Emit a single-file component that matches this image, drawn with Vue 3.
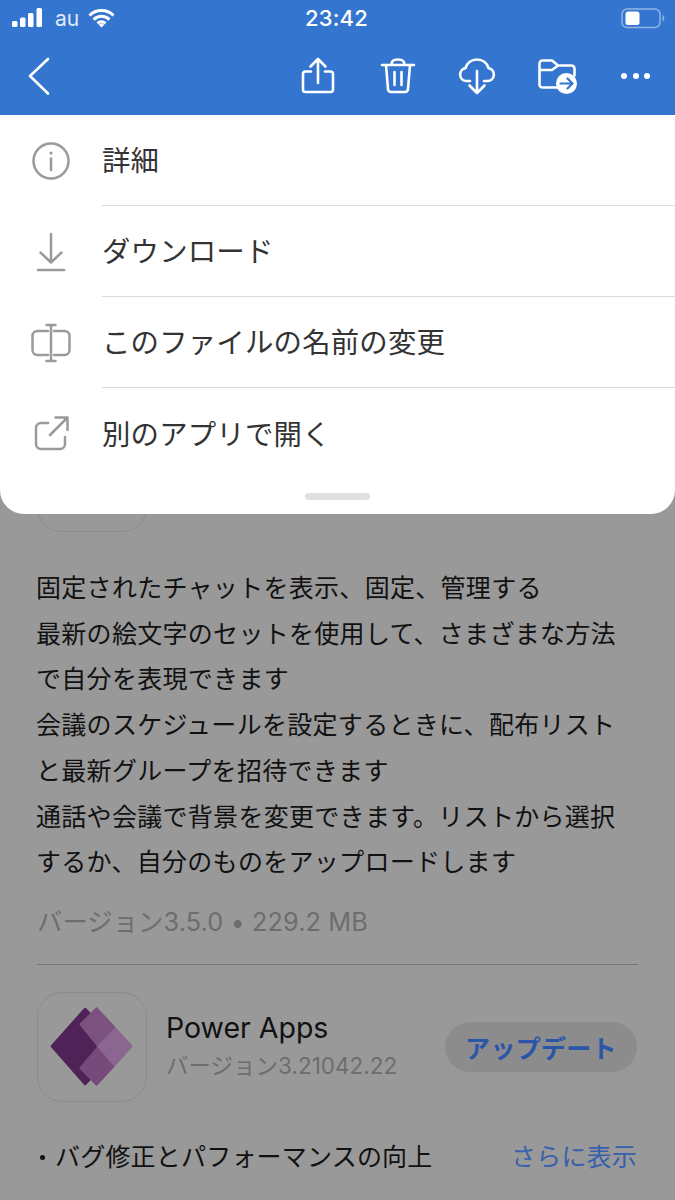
<template>
  <div class="screen">
    <header class="top">
      <div class="status">
        <div class="status-left">
          <svg class="signal" width="31" height="20" viewBox="0 0 31 20">
            <rect x="0" y="13" width="5.5" height="6" rx="1.5" />
            <rect x="8" y="9.5" width="5.5" height="9.5" rx="1.5" />
            <rect x="16" y="5" width="5.5" height="14" rx="1.5" />
            <rect x="24.5" y="0" width="5.5" height="19" rx="1.5" />
          </svg>
          <span class="carrier">au</span>
          <svg width="27" height="20" viewBox="0 0 27 20">
            <path d="M1.5 7.5a17 17 0 0 1 24 0M5.6 11.6a11.2 11.2 0 0 1 15.8 0M9.5 15.4a5.6 5.6 0 0 1 8 0" fill="none" stroke="#fff" stroke-width="3" />
            <path d="M10.8 16.8a3.8 3.8 0 0 1 5.4 0l-2.7 2.8z" fill="#fff" />
          </svg>
        </div>
        <span class="clock">23:42</span>
        <div class="status-right">
          <svg width="44" height="21" viewBox="0 0 44 21">
            <rect x="1" y="1" width="38" height="18.5" rx="5" fill="none" stroke="#fff" stroke-opacity="0.45" stroke-width="1.5" />
            <rect x="4.5" y="3.5" width="14" height="13.5" rx="2.5" fill="#fff" />
            <path d="M41.5 7v6.5c1.2-.4 1.8-1.7 1.8-3.2s-.6-2.9-1.8-3.3z" fill="#fff" fill-opacity="0.45" />
          </svg>
        </div>
      </div>
      <nav class="toolbar">
        <svg class="tool back" viewBox="0 0 40 40">
          <path d="M29 3 11 20l18 17.500" />
        </svg>
        <div class="tools">
          <svg class="tool" viewBox="0 0 40 40">
            <path d="M13 15.5H7.5A2.5 2.5 0 0 0 5 18v15.5A2.5 2.5 0 0 0 7.5 36h25a2.5 2.5 0 0 0 2.5-2.5V18a2.5 2.5 0 0 0-2.5-2.5H27" />
            <path d="M20 27V3M12.5 10.5 20 3l7.5 7.5" />
          </svg>
          <svg class="tool" viewBox="0 0 40 40">
            <path d="M4 9h32M13.5 9c0-4 1.5-5.500 6.500-5.500s6.500 1.500 6.500 5.500" />
            <path d="M8 9l2 24a3 3 0 0 0 3 3h14a3 3 0 0 0 3-3l2-24" />
            <path d="M16.500 16v13M23.500 16v13" />
          </svg>
          <svg class="tool" viewBox="0 0 40 40">
            <path d="M13 25H9.500a6.500 6.500 0 0 1-1-12.900C10 7 14.500 3.500 20 3.500S30 7 31.500 12.100a6.500 6.500 0 0 1-1 12.900H27" />
            <path d="M20 15v22M12.500 29.500 20 37l7.500-7.500" />
          </svg>
          <svg class="tool" viewBox="0 0 40 40">
            <path d="M20 31.500H5.500A3 3 0 0 1 2.500 28.500V7.500A3 3 0 0 1 5.500 4.500h9.500l6 5h13.500a3 3 0 0 1 3 3v7M2.500 14h12.500l6-4.500" />
            <circle class="solid" cx="29.500" cy="27.500" r="10.500" />
            <path class="cut" d="M23.500 27.500h11.500M30.500 22.500l5 5-5 5" />
          </svg>
          <svg class="tool" viewBox="0 0 40 40">
            <circle class="solid" cx="8" cy="20" r="3" />
            <circle class="solid" cx="20" cy="20" r="3" />
            <circle class="solid" cx="31" cy="20" r="3" />
          </svg>
        </div>
      </nav>
    </header>

    <main class="content">
      <div class="app-icon"></div>
      <div class="notes">
        <p v-for="line in notes" :key="line">{{ line }}</p>
      </div>
      <p class="size">バージョン3.5.0 • 229.2 MB</p>
      <div class="app-row">
        <div class="app-icon">
          <svg width="110" height="110" viewBox="0 0 110 110">
            <g stroke-width="3" stroke-linejoin="round">
              <path d="M14.500 54.300 48 16.500 55 24 59 54.300 55 85 48 92.500z" fill="#4f2358" stroke="#4f2358" />
              <path d="M43.800 76.300 61 56 76.500 74.300 59.700 92.800z" fill="#774a7c" stroke="#774a7c" />
              <path d="M43.800 32 59.700 16.200 77.500 35.300 61 53z" fill="#7b5180" stroke="#7b5180" />
              <path d="M79 37 94.800 54.300 78 72.800 62 54.300z" fill="#8b6690" stroke="#8b6690" />
            </g>
          </svg>
        </div>
        <div class="app-info">
          <div class="app-name">Power Apps</div>
          <div class="app-version">バージョン3.21042.22</div>
        </div>
        <button class="update">アップデート</button>
      </div>
      <div class="more-row">
        <span class="bullet-line"><i class="bullet"></i>バグ修正とパフォーマンスの向上</span>
        <a class="more">さらに表示</a>
      </div>
    </main>

    <section class="sheet">
      <div v-for="(item, i) in menu" :key="item" class="menu-row">
        <svg class="menu-icon" viewBox="0 0 40 40">
          <template v-if="i === 0">
            <circle cx="20" cy="20" r="17.500" />
            <path d="M20 17.500v11.500" />
            <circle class="dot" cx="20" cy="12" r="1.600" />
          </template>
          <template v-else-if="i === 1">
            <path d="M20 2v28.500M9.500 20.500 20 30.500l10.500-10" />
            <path d="M7 38h26" stroke-width="2.600" />
          </template>
          <template v-else-if="i === 2">
            <path d="M17 8H6.500A5 5 0 0 0 1.500 13v14a5 5 0 0 0 5 5H17M23 8h10.500a5 5 0 0 1 5 5v14a5 5 0 0 1-5 5H23" />
            <path d="M20 2v36M15.500 2h9M15.500 38h9" />
          </template>
          <template v-else>
            <path d="M17 9H10a5 5 0 0 0-5 5v16a5 5 0 0 0 5 5h19a5 5 0 0 0 5-5v-7" />
            <path d="M19 21 35.500 4.500M24.500 3.500h12V16" />
          </template>
        </svg>
        <div class="menu-label">{{ item }}</div>
      </div>
      <div class="grabber"></div>
    </section>
  </div>
</template>

<script setup>
const menu = ["詳細", "ダウンロード", "このファイルの名前の変更", "別のアプリで開く"];

const notes = [
  "固定されたチャットを表示、固定、管理する",
  "最新の絵文字のセットを使用して、さまざまな方法",
  "で自分を表現できます",
  "会議のスケジュールを設定するときに、配布リスト",
  "と最新グループを招待できます",
  "通話や会議で背景を変更できます。リストから選択",
  "するか、自分のものをアップロードします"
];
</script>

<style>
body {
  background: #999;
}
</style>

<style scoped>
.screen {
  position: relative;
  width: 675px;
  height: 1200px;
  overflow: hidden;
  background: #999;
  font-family: "Inter", "Noto Sans CJK JP", sans-serif;
  color: #111;
}

.top {
  height: 115px;
  background: #3476cf;
  color: #fff;
}

.status {
  height: 36px;
  padding: 0 10px 0 12px;
  display: grid;
  grid-template-columns: 1fr auto 1fr;
  align-items: center;
}

.status-left {
  display: flex;
  align-items: center;
}

.signal rect {
  fill: #fff;
}

.carrier {
  margin: 0 9px 0 12px;
  font-size: 21px;
  opacity: 0.85;
}

.clock {
  margin-right: 4px;
  font-size: 22px;
  font-weight: 500;
  letter-spacing: 0.2px;
}

.status-right {
  display: flex;
  justify-content: flex-end;
}

.toolbar {
  height: 79px;
  padding: 0 19px;
  display: flex;
  align-items: center;
  justify-content: space-between;
}

.tools {
  display: flex;
  gap: 39.500px;
}

.tool {
  width: 40px;
  height: 40px;
  fill: none;
  stroke: #fff;
  stroke-width: 2.600;
  stroke-linecap: round;
  stroke-linejoin: round;
}

.tool .solid {
  fill: #fff;
  stroke: none;
}

.tool .cut {
  stroke: #3476cf;
  stroke-width: 2.200;
}

.content {
  padding: 307px 37px 0;
}

.app-icon {
  width: 110px;
  height: 110px;
  box-sizing: border-box;
  border: 1.500px solid #8c8c8c;
  border-radius: 25px;
  flex-shrink: 0;
  display: flex;
  align-items: center;
  justify-content: center;
}

.notes {
  margin: 34px 0 0 -1px;
  font-size: 25px;
  line-height: 45.700px;
  letter-spacing: 0.300px;
  white-space: nowrap;
}

.notes p,
.size {
  margin: 0;
}

.size {
  margin-top: 18px;
  padding-bottom: 24px;
  border-bottom: 1px solid #777;
  font-size: 25.300px;
  line-height: 36px;
  letter-spacing: 0.100px;
  color: #6d6d6d;
}

.app-row {
  margin-top: 27px;
  display: flex;
  align-items: center;
}

.app-info {
  margin-left: 19px;
  flex: 1;
}

.app-name {
  font-size: 28.500px;
  line-height: 38px;
}

.app-version {
  font-size: 22.500px;
  line-height: 38px;
  color: #6d6d6d;
}

.update {
  width: 192px;
  height: 50px;
  margin: 1px 1px 0 0;
  padding: 0;
  border: none;
  border-radius: 25px;
  background: #8c8c8c;
  color: #2b55a8;
  font: 700 25px "Inter", "Noto Sans CJK JP", sans-serif;
  letter-spacing: 0.300px;
}

.more-row {
  margin-top: 36px;
  display: flex;
  justify-content: space-between;
  font-size: 25px;
  line-height: 38px;
}

.bullet-line {
  display: flex;
  align-items: center;
  letter-spacing: 0.200px;
}

.bullet {
  width: 5px;
  height: 5px;
  margin: 2px 10px 0 3px;
  border-radius: 50%;
  background: #111;
}

.more {
  margin-right: 1px;
  color: #3860ab;
  letter-spacing: 0.200px;
}

.sheet {
  position: absolute;
  top: 115px;
  left: 0;
  right: 0;
  height: 399px;
  background: #fff;
  border-radius: 0 0 24px 24px;
}

.menu-row {
  height: 91px;
  padding-left: 31px;
  display: flex;
  align-items: center;
}

.menu-icon {
  width: 40px;
  height: 40px;
  margin-right: 31px;
  flex-shrink: 0;
  fill: none;
  stroke: #9a9a9a;
  stroke-width: 2.500;
  stroke-linecap: round;
  stroke-linejoin: round;
}

.menu-icon .dot {
  fill: #9a9a9a;
  stroke: none;
}

.menu-label {
  flex: 1;
  height: 100%;
  box-sizing: border-box;
  display: flex;
  align-items: center;
  padding-bottom: 3px;
  font-size: 28.400px;
  letter-spacing: 0.200px;
  color: #333;
  border-bottom: 1px solid #dcdcdc;
}

.menu-row:nth-child(4) .menu-label {
  border-bottom: none;
}

.grabber {
  position: absolute;
  left: 305px;
  bottom: 14px;
  width: 65px;
  height: 7px;
  border-radius: 4px;
  background: #e0e0e0;
}
</style>
